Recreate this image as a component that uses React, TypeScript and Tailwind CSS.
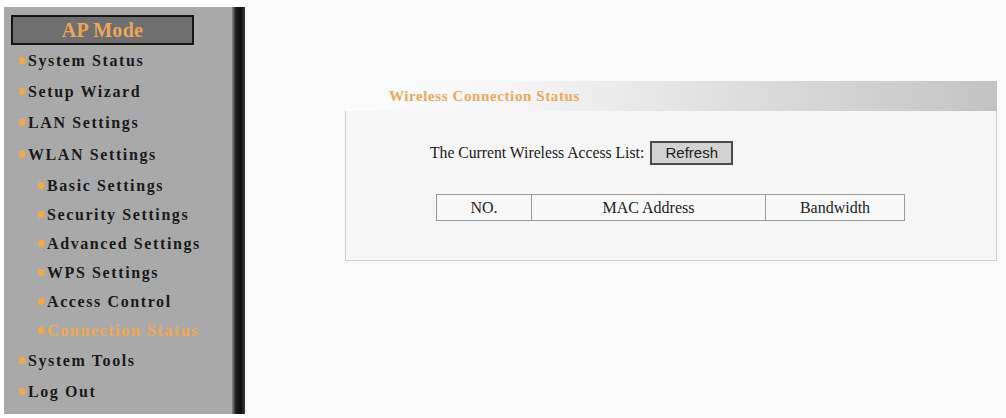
import React from "react";

const serif = { fontFamily: '"Liberation Serif", "Times New Roman", serif' };

type Item = { label: string; level: 1 | 2; h: number; active?: boolean };

const items: Item[] = [
  { label: "System Status", level: 1, h: 31 },
  { label: "Setup Wizard", level: 1, h: 31 },
  { label: "LAN Settings", level: 1, h: 31 },
  { label: "WLAN Settings", level: 1, h: 33 },
  { label: "Basic Settings", level: 2, h: 29 },
  { label: "Security Settings", level: 2, h: 29 },
  { label: "Advanced Settings", level: 2, h: 29 },
  { label: "WPS Settings", level: 2, h: 29 },
  { label: "Access Control", level: 2, h: 29 },
  { label: "Connection Status", level: 2, h: 29, active: true },
  { label: "System Tools", level: 1, h: 31 },
  { label: "Log Out", level: 1, h: 31 },
];

function MenuRow({ item }: { item: Item }) {
  return (
    <div
      className={`flex items-center ${item.level === 1 ? "pl-[15px]" : "pl-[34px]"}`}
      style={{ height: item.h }}
    >
      <span className="w-[6px] h-[7px] bg-[#f0a848] rounded-[2px] mr-[3px] shrink-0 blur-[0.7px]" />
      <span
        className={`text-[16px] font-bold tracking-[1.6px] leading-none ${
          item.active ? "text-[#f0a850]" : "text-[#1a1a1a]"
        }`}
        style={serif}
      >
        {item.label}
      </span>
    </div>
  );
}

export default function App() {
  return (
    <div className="w-[1006px] h-[418px] bg-white flex overflow-hidden">
      <div className="ml-[4px] mt-[7px] h-[407px] flex">
        <div className="w-[228px] h-full bg-[#a9a9a9] pt-[8px] pl-[7px]">
          <div className="w-[183px] h-[30px] border-2 border-[#151515] bg-[#6f6f6f] flex items-center justify-center">
            <span className="text-[20px] font-bold text-[#eda55a] leading-none tracking-[0.3px]" style={serif}>
              AP Mode
            </span>
          </div>
          <div className="-ml-[7px]">
            {items.map((it) => (
              <MenuRow key={it.label} item={it} />
            ))}
          </div>
        </div>
        <div className="w-[13px] h-full bg-[linear-gradient(to_right,#8a8a8a,#1c1c1c_30%,#0e0e0e_70%,#3a3a3a)]" />
      </div>
      <div className="flex-1 bg-[#f9f9f9] pt-[81px] pl-[100px]">
        <div className="w-[652px]">
          <div className="h-[30px] bg-[linear-gradient(to_right,#fbfbfb,#f6f6f6_25%,#c3c3c3)] flex items-center pl-[44px]">
            <span className="text-[15px] font-bold text-[#eaa85e] tracking-[0.6px]" style={serif}>
              Wireless Connection Status
            </span>
          </div>
          <div className="border border-[#cfcfcf] border-t-0 bg-[#f6f6f6] pt-[30px] pb-[39px]">
            <div className="flex items-center pl-[84px]">
              <span className="text-[15.7px] text-[#1a1a1a]" style={serif}>
                The Current Wireless Access List:
              </span>
              <button
                className="ml-[6px] w-[83px] h-[24px] bg-[#d3d3d3] border-2 border-[#4a4a4a] text-[15px] text-[#222] flex items-center justify-center"
                style={{ fontFamily: '"Liberation Sans", Arial, sans-serif' }}
              >
                Refresh
              </button>
            </div>
            <div className="ml-[90px] mt-[29px] w-[469px] h-[27px] border border-[#9a9a9a] bg-[#f8f8f8] flex text-[16px] text-[#222]" style={serif}>
              <div className="w-[95px] border-r border-[#9a9a9a] flex items-center justify-center">NO.</div>
              <div className="w-[234px] border-r border-[#9a9a9a] flex items-center justify-center">MAC Address</div>
              <div className="flex-1 flex items-center justify-center">Bandwidth</div>
            </div>
          </div>
        </div>
      </div>
    </div>
  );
}
